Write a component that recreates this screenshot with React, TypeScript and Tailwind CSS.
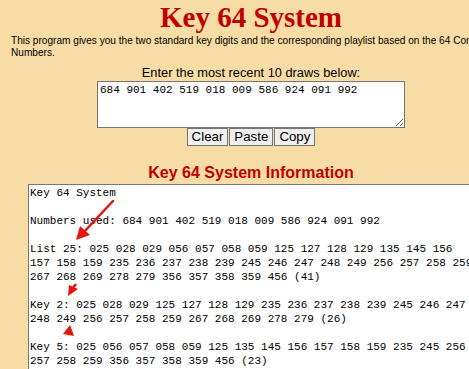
const lines = [
  "Key 64 System",
  "",
  "Numbers used: 684 901 402 519 018 009 586 924 091 992",
  "",
  "List 25: 025 028 029 056 057 058 059 125 127 128 129 135 145 156",
  "157 158 159 235 236 237 238 239 245 246 247 248 249 256 257 258 259",
  "267 268 269 278 279 356 357 358 359 456 (41)",
  "",
  "Key 2: 025 028 029 125 127 128 129 235 236 237 238 239 245 246 247",
  "248 249 256 257 258 259 267 268 269 278 279 (26)",
  "",
  "Key 5: 025 056 057 058 059 125 135 145 156 157 158 159 235 245 256",
  "257 258 259 356 357 358 359 456 (23)",
];

function Arrows() {
  return (
    <svg className="absolute left-0 top-0 pointer-events-none" width="469" height="369">
      <line x1="113" y1="201" x2="83" y2="233" stroke="#e8140c" strokeWidth="2.5" strokeLinecap="round" />
      <polygon points="76,240 80,226 90,235" fill="#e8140c" />
      <line x1="76" y1="284" x2="73" y2="288" stroke="#e8140c" strokeWidth="2.5" />
      <polygon points="68,296 69,285 78,289" fill="#e8140c" />
      <polygon points="70,325 63,334 74,336" fill="#e8140c" />
    </svg>
  );
}

export default function App() {
  return (
    <div className="relative w-[469px] h-[369px] overflow-hidden bg-[#f8dca5]">
      <div className="w-[502px] px-[11px] flex flex-col items-center">
        <h1 className="mt-0 text-[29px] leading-[34px] font-bold text-[#c00000] font-['Liberation_Serif',serif]">
          Key 64 System
        </h1>
        <p className="self-start w-[494px] mt-[1px] text-[10.1px] leading-[12px] text-black font-['Liberation_Sans',Arial,sans-serif]">
          This program gives you the two standard key digits and the corresponding playlist based on the 64 Controlling
          Numbers.
        </p>
        <div className="mt-[6px] text-[12.8px] leading-[16px] text-black font-['Liberation_Sans',Arial,sans-serif]">
          Enter the most recent 10 draws below:
        </div>
        <textarea
          className="mt-0 w-[308px] h-[47px] bg-white border border-[#767676] px-[2px] py-[1px] text-[11px] leading-[14px] text-black font-['Liberation_Mono',monospace] resize-y outline-none"
          defaultValue="684 901 402 519 018 009 586 924 091 992"
        />
        <div className="flex gap-[1px] font-['Liberation_Sans',Arial,sans-serif] text-[13.3px] leading-[16px]">
          {["Clear", "Paste", "Copy"].map((b) => (
            <button key={b} className="bg-[#efefef] border border-[#767676] px-[4px] h-[18px] text-black">
              {b}
            </button>
          ))}
        </div>
        <h2 className="mt-[17px] text-[16px] leading-[20px] font-bold text-[#c00000] font-['Liberation_Sans',Arial,sans-serif]">
          Key 64 System Information
        </h2>
      </div>
      <div className="ml-[28px] mt-[1px] w-[460px] h-[200px] bg-white border border-[#767676] border-r-0 px-[1px] pt-[1px]">
        <pre className="text-[11px] leading-[14px] text-black font-['Liberation_Mono',monospace]">
          {lines.join("\n")}
        </pre>
      </div>
      <Arrows />
    </div>
  );
}
